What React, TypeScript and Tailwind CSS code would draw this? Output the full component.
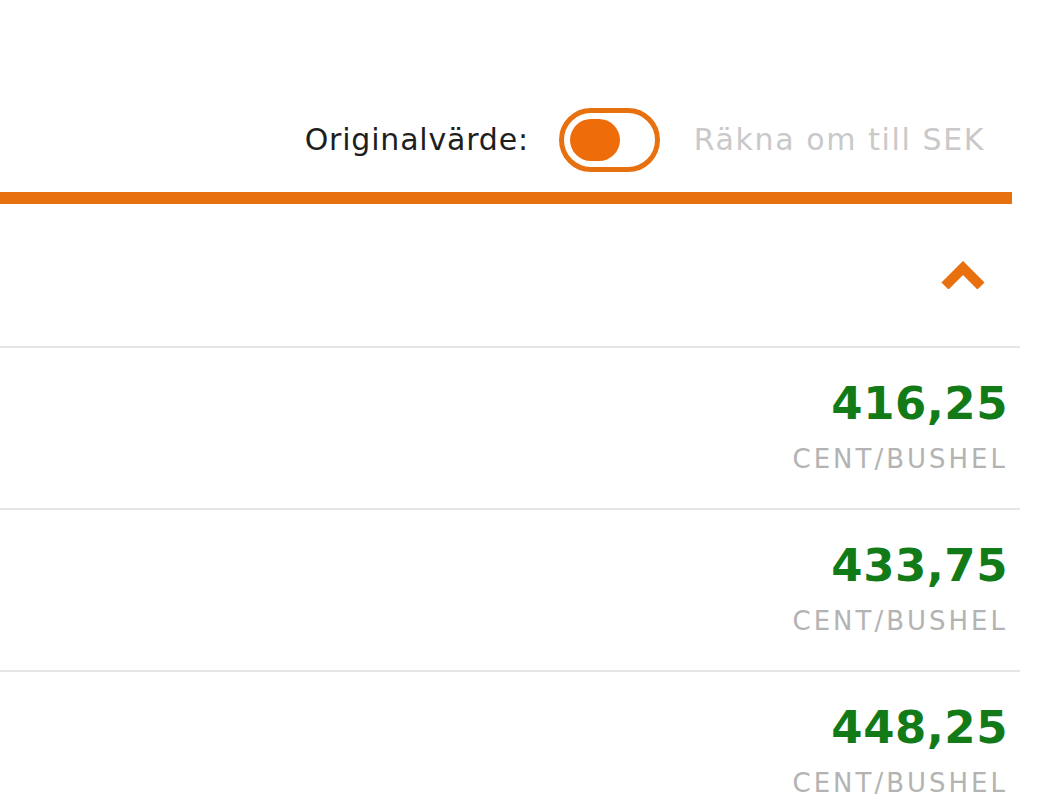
import { useState } from 'react';

interface Quote {
  id: string;
  price: string;
  unit: string;
}

const quotes: Quote[] = [
  { id: 'q1', price: '416,25', unit: 'CENT/BUSHEL' },
  { id: 'q2', price: '433,75', unit: 'CENT/BUSHEL' },
  { id: 'q3', price: '448,25', unit: 'CENT/BUSHEL' },
];

const font = { fontFamily: '"DejaVu Sans", "Liberation Sans", sans-serif' };

export default function App() {
  const [convert, setConvert] = useState(false);
  const [open, setOpen] = useState(true);

  return (
    <div className="min-h-[802px] bg-white" style={font}>
      <div className="w-[1020px]">
        {/* valutaväxel */}
        <div className="flex items-center justify-end pt-[108px] pr-[35px]">
          <span className="text-[30px] leading-none tracking-[0.8px] text-[#1e1e1e]">Originalvärde:</span>
          <button
            type="button"
            onClick={() => setConvert(!convert)}
            className={`ml-[30px] flex h-[64px] w-[101px] items-center rounded-full border-[5px] border-[#e8710f] px-[6px] ${convert ? 'justify-end' : 'justify-start'}`}
          >
            <span className="block h-[42px] w-[50px] rounded-full bg-[#ee6c0a]" />
          </button>
          <span className={`ml-[34px] text-[30px] leading-none tracking-[1.6px] ${convert ? 'text-[#1e1e1e]' : 'text-[#c9c9c9]'}`}>
            Räkna om till SEK
          </span>
        </div>

        <div className="mt-[20px] mr-[8px] h-[12px] bg-[#e8710f]" />

        {/* fäll ihop / ut */}
        <div className="flex h-[142px] items-center justify-end pr-[34px]">
          <button type="button" onClick={() => setOpen(!open)}>
            <svg width="46" height="28" viewBox="0 0 46 28" className={open ? '' : 'rotate-180'}>
              <polyline points="5,25 23,7 41,25" fill="none" stroke="#e8700e" strokeWidth="10" strokeLinejoin="miter" />
            </svg>
          </button>
        </div>

        {open &&
          quotes.map((q) => (
            <div key={q.id} className="h-[162px] border-t-2 border-[#e6e6e6] pt-[33px] pr-[12px] text-right">
              <div className="text-[45px] font-bold leading-none tracking-[0.5px] text-[#137a18]">{q.price}</div>
              <div className="mt-[20px] text-[26px] leading-none tracking-[3px] text-[#b3b3b3]">{q.unit}</div>
            </div>
          ))}
      </div>
    </div>
  );
}
